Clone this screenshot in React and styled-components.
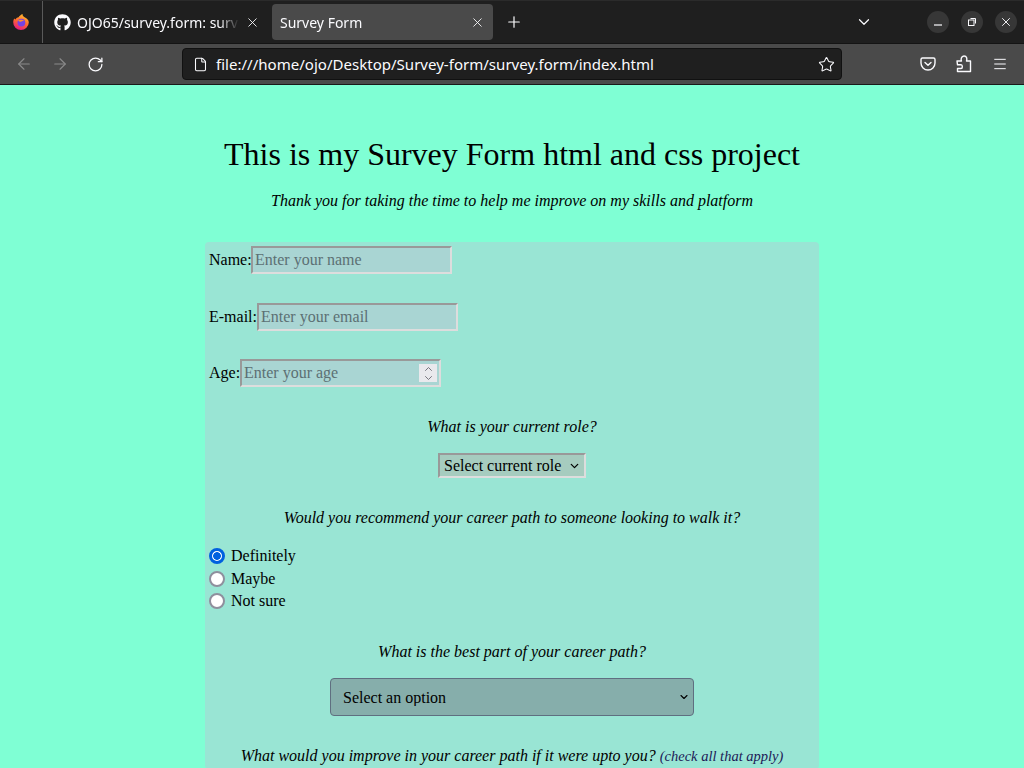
import React from 'react'
import styled, { createGlobalStyle } from 'styled-components'
import { ArrowLeft, ArrowRight, RotateCw, File, Star, Menu, Plus, X, ChevronDown, ChevronUp } from 'lucide-react'
import { FaGithub } from 'react-icons/fa'

const Global = createGlobalStyle`
  html, body {
    margin: 0;
    height: 768px;
    overflow: hidden;
    background: #7fffd4;
  }
  * { box-sizing: border-box; }
`
const TabBar = styled.div`
  display: flex;
  align-items: center;
  height: 44px;
  background: #1f1f1f;
  border-top: 1px solid #2b2b2b;
  border-bottom: 1px solid #141414;
  color: #fbfbfe;
  font-family: "Noto Sans", sans-serif;
  font-size: 14px;
`
const FoxCell = styled.div`
  display: flex;
  align-items: center;
  justify-content: center;
  width: 43px;
  height: 100%;
  border-right: 1px solid #5a5a5a;
`
const Tab = styled.div`
  display: flex;
  align-items: center;
  height: 36px;
  margin-left: ${p => p.$ml}px;
  width: ${p => p.$w}px;
  padding: 0 8px 0 ${p => p.$pl}px;
  border-radius: 4px;
  background: ${p => (p.$active ? '#4a4a4a' : 'transparent')};
  gap: 6px;
`
const TabTitle = styled.span`
  flex: 1;
  overflow: hidden;
  white-space: nowrap;
  mask-image: linear-gradient(to left, transparent 0, #000 20px);
`
const TabSpacer = styled.div`
  flex: 1;
`
const PlusButton = styled.div`
  display: flex;
  margin-left: 12px;
`
const ListButton = styled.div`
  display: flex;
  margin-right: 54px;
`
const WinButtons = styled.div`
  display: flex;
  gap: 12px;
  margin-right: 7px;
`
const WinButton = styled.div`
  display: flex;
  align-items: center;
  justify-content: center;
  width: 22px;
  height: 22px;
  border-radius: 50%;
  background: #373737;
`
const NavBar = styled.div`
  display: flex;
  align-items: center;
  height: 41px;
  padding-left: 15px;
  background: #4a4a4a;
  border-bottom: 1px solid #1a1a1a;
  color: #fbfbfe;
`
const NavIcons = styled.div`
  display: flex;
  align-items: center;
  gap: 18px;
  width: 167px;
`
const UrlBar = styled.div`
  display: flex;
  align-items: center;
  width: 660px;
  height: 32px;
  padding: 0 6px 0 10px;
  gap: 8px;
  background: #1f1f1f;
  border: 1px solid #111;
  border-radius: 4px;
  font-family: "Noto Sans", sans-serif;
  font-size: 15.05px;
`
const UrlText = styled.span`
  flex: 1;
  white-space: nowrap;
`
const RightIcons = styled.div`
  display: flex;
  align-items: center;
  gap: 20px;
  margin-left: 78px;
`
const Page = styled.main`
  font-family: "Liberation Serif", serif;
  font-size: 16px;
  color: #000;
`
const Header = styled.header`
  padding-top: 51px;
  text-align: center;
`
const Title = styled.h1`
  margin: 0;
  font-size: 32px;
  font-weight: 400;
  line-height: 37px;
`
const Subtitle = styled.p`
  margin: 19px 0 0;
  font-style: italic;
  line-height: 18px;
`
const Form = styled.form`
  width: 614px;
  margin: 32px auto 0 205px;
  padding: 4px;
  background: #99e5d4;
  border-radius: 4px;
`
const FieldRow = styled.div`
  display: flex;
  align-items: center;
  margin-bottom: 28.5px;
`
const FieldLabel = styled.label`
  flex: none;
  width: ${p => p.$w}px;
  white-space: nowrap;
`
const Field = styled.div`
  position: relative;
  display: flex;
`
const TextInput = styled.input`
  width: 201px;
  height: 28px;
  padding: 3px 3px 3px 2px;
  font: inherit;
  background: #a9d5d3;
  border: 2px solid;
  border-color: #999 #ddd #ddd #999;
  outline: none;
  &::placeholder { color: #5c7073; opacity: 1; }
`
const Spin = styled.div`
  position: absolute;
  top: 5px;
  right: 4px;
  display: flex;
  flex-direction: column;
  align-items: center;
  justify-content: center;
  width: 18px;
  height: 18px;
  background: #e9e9ed;
  color: #6a6a73;
  svg { margin: -1.5px 0; }
`
const Question = styled.p`
  margin: ${p => p.$top}px 0 0;
  text-align: center;
  font-style: italic;
  line-height: 18px;
`
const Small = styled.span`
  color: #1d1a57;
  font-size: 14.5px;
`
const SelectRow = styled.div`
  display: flex;
  justify-content: center;
  margin-top: ${p => p.$top}px;
`
const SelectBox = styled.div`
  position: relative;
  display: flex;
`
const Chevron = styled.div`
  position: absolute;
  top: 50%;
  right: ${p => p.$right}px;
  display: flex;
  transform: translateY(-50%);
  pointer-events: none;
`
const RoleSelect = styled.select`
  appearance: none;
  width: 148px;
  height: 25px;
  padding: 0 0 0 4px;
  font: inherit;
  color: #000;
  background: #a6ccbf;
  border: 2px solid;
  border-color: #999 #ddd #ddd #999;
  border-radius: 0;
`
const BestSelect = styled.select`
  appearance: none;
  width: 364px;
  height: 38px;
  padding: 2px 12px 0;
  font: inherit;
  color: #000;
  background: #86aeab;
  border: 1px solid #5f6f80;
  border-radius: 4px;
`
const RadioGroup = styled.div`
  display: flex;
  flex-direction: column;
  margin-top: 18px;
`
const RadioLabel = styled.label`
  display: flex;
  align-items: center;
  gap: 6px;
  height: 22.5px;
`
const Radio = styled.input`
  appearance: none;
  width: 16px;
  height: 16px;
  margin: 0;
  background: #fff;
  border: 2px solid #8f8f9d;
  border-radius: 50%;
  &:checked {
    border: 3px solid #0060df;
    background: radial-gradient(circle, #0060df 0 3.5px, #fff 4.2px);
  }
`

const FirefoxLogo = () => (
  <svg width="18" height="18" viewBox="0 0 18 18">
    <defs>
      <linearGradient id="fx" x1="0.7" y1="0" x2="0.3" y2="1">
        <stop offset="0" stopColor="#ffc22e" />
        <stop offset="0.5" stopColor="#ff6a30" />
        <stop offset="1" stopColor="#e31587" />
      </linearGradient>
    </defs>
    <path d="M9 17A7.8 7.8 0 0 1 1.2 9C1.2 7.6 1.6 6.4 2.2 5.4L3.5 6.6C4.2 5 5.6 4.2 6.6 4.2C7.2 2.8 9 1.6 10.6.9C10.4 2.2 11 3.2 12.6 4.2C15.2 5.4 16.8 7 16.8 9.4A7.8 7.8 0 0 1 9 17Z" fill="url(#fx)" />
    <circle cx="9.4" cy="9.6" r="3.9" fill="#7542e5" />
    <path d="M6 7.6C7.4 6.6 10.4 6.2 12.4 8.4C11 7.8 9.8 8 9 8.8C8 9 6.8 8.6 6 7.6Z" fill="#ff8a2e" />
  </svg>
)

const MinimizeIcon = () => (
  <svg width="10" height="10" viewBox="0 0 10 10" fill="none" stroke="#fbfbfe" strokeWidth="1.2">
    <path d="M1 8H9" />
  </svg>
)

const RestoreIcon = () => (
  <svg width="10" height="10" viewBox="0 0 10 10" fill="none" stroke="#fbfbfe" strokeWidth="1">
    <rect x="1.5" y="3" width="5.5" height="5.5" />
    <path d="M3.5 1.5H8.5V6.5" />
  </svg>
)

const PocketIcon = () => (
  <svg width="16" height="16" viewBox="0 0 16 16" fill="none" stroke="#fbfbfe" strokeWidth="1.4" strokeLinecap="round" strokeLinejoin="round">
    <path d="M2.5 2H13.5A1.5 1.5 0 0 1 15 3.5V7A7 7 0 0 1 1 7V3.5A1.5 1.5 0 0 1 2.5 2Z" />
    <path d="M5 6.5L8 9.3L11 6.5" />
  </svg>
)

const ExtensionIcon = () => (
  <svg width="16" height="18" viewBox="0 0 16 18" fill="none" stroke="#fbfbfe" strokeWidth="1.4" strokeLinejoin="round">
    <path d="M1 6H5.5C4.8 4.8 5 1 8 1C11 1 11.2 4 10.5 6H14.5V16.5H1.5V13.5H5C6.8 13.5 6.8 9.8 5 9.8H1.5Z" />
  </svg>
)

const App = () => {
  return (
    <>
      <Global />
      <TabBar>
        <FoxCell><FirefoxLogo /></FoxCell>
        <Tab $ml={0} $w={225} $pl={11}>
          <FaGithub size={17} />
          <TabTitle>OJO65/survey.form: survey</TabTitle>
          <X size={15} strokeWidth={1.4} />
        </Tab>
        <Tab $ml={4} $w={221} $pl={8} $active>
          <TabTitle>Survey Form</TabTitle>
          <X size={15} strokeWidth={1.4} />
        </Tab>
        <PlusButton><Plus size={18} strokeWidth={1.6} /></PlusButton>
        <TabSpacer />
        <ListButton><ChevronDown size={18} strokeWidth={1.6} /></ListButton>
        <WinButtons>
          <WinButton><MinimizeIcon /></WinButton>
          <WinButton><RestoreIcon /></WinButton>
          <WinButton><X size={14} strokeWidth={1.6} /></WinButton>
        </WinButtons>
      </TabBar>
      <NavBar>
        <NavIcons>
          <ArrowLeft size={18} strokeWidth={1.5} color="#8a8a8a" />
          <ArrowRight size={18} strokeWidth={1.5} color="#8a8a8a" />
          <RotateCw size={17} strokeWidth={1.8} />
        </NavIcons>
        <UrlBar>
          <File size={15} strokeWidth={1.7} />
          <UrlText>file:///home/ojo/Desktop/Survey-form/survey.form/index.html</UrlText>
          <Star size={17} strokeWidth={1.5} />
        </UrlBar>
        <RightIcons>
          <PocketIcon />
          <ExtensionIcon />
          <Menu size={16} strokeWidth={1.5} />
        </RightIcons>
      </NavBar>
      <Page>
        <Header>
          <Title>This is my Survey Form html and css project</Title>
          <Subtitle>Thank you for taking the time to help me improve on my skills and platform</Subtitle>
        </Header>
        <Form>
          <FieldRow>
            <FieldLabel $w={42}>Name:</FieldLabel>
            <TextInput placeholder="Enter your name" />
          </FieldRow>
          <FieldRow>
            <FieldLabel $w={48}>E-mail:</FieldLabel>
            <TextInput placeholder="Enter your email" />
          </FieldRow>
          <FieldRow>
            <FieldLabel $w={31}>Age:</FieldLabel>
            <Field>
              <TextInput placeholder="Enter your age" />
              <Spin>
                <ChevronUp size={13} strokeWidth={1.8} />
                <ChevronDown size={13} strokeWidth={1.8} />
              </Spin>
            </Field>
          </FieldRow>
          <Question $top={31}>What is your current role?</Question>
          <SelectRow $top={17}>
            <SelectBox>
              <RoleSelect>
                <option>Select current role</option>
              </RoleSelect>
              <Chevron $right={5}><ChevronDown size={13} strokeWidth={2.3} /></Chevron>
            </SelectBox>
          </SelectRow>
          <Question $top={31}>Would you recommend your career path to someone looking to walk it?</Question>
          <RadioGroup>
            <RadioLabel><Radio type="radio" name="rec" defaultChecked />Definitely</RadioLabel>
            <RadioLabel><Radio type="radio" name="rec" />Maybe</RadioLabel>
            <RadioLabel><Radio type="radio" name="rec" />Not sure</RadioLabel>
          </RadioGroup>
          <Question $top={30}>What is the best part of your career path?</Question>
          <SelectRow $top={17}>
            <SelectBox>
              <BestSelect>
                <option>Select an option</option>
              </BestSelect>
              <Chevron $right={4}><ChevronDown size={12} strokeWidth={2.2} /></Chevron>
            </SelectBox>
          </SelectRow>
          <Question $top={31}>
            What would you improve in your career path if it were upto you? <Small>(check all that apply)</Small>
          </Question>
        </Form>
      </Page>
    </>
  )
}

export default App
